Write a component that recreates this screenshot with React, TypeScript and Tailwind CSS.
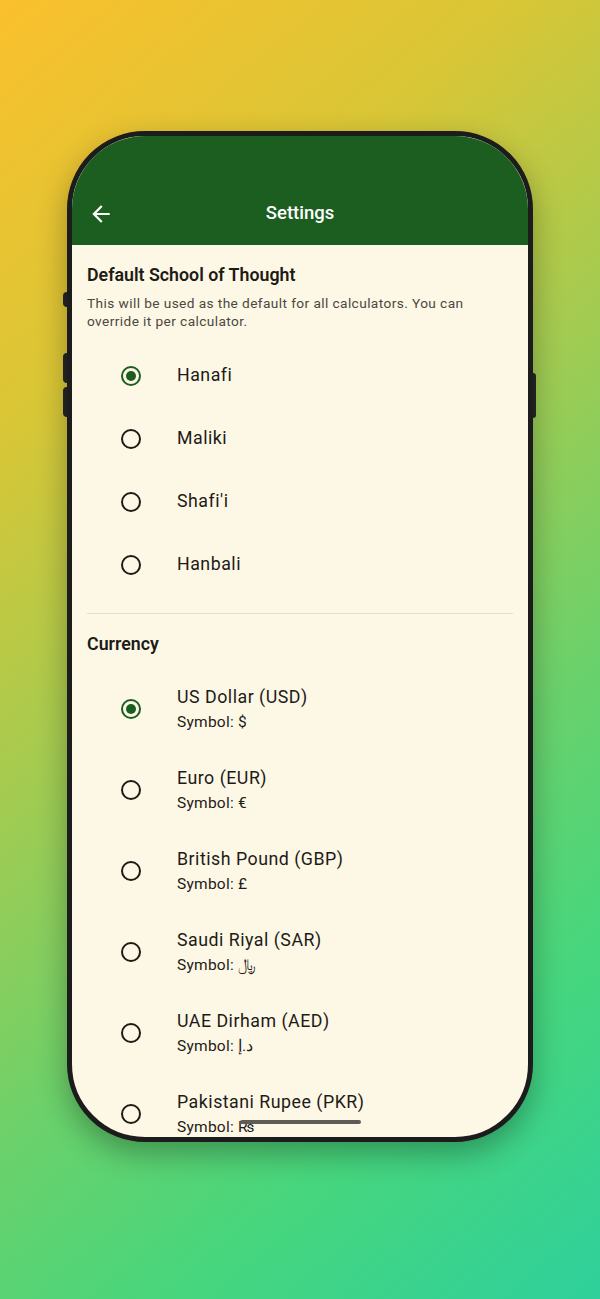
import { useState } from "react";

const schools = ["Hanafi", "Maliki", "Shafi'i", "Hanbali"];

const currencies = [
  { name: "US Dollar (USD)", symbol: "$" },
  { name: "Euro (EUR)", symbol: "€" },
  { name: "British Pound (GBP)", symbol: "£" },
  { name: "Saudi Riyal (SAR)", symbol: "﷼" },
  { name: "UAE Dirham (AED)", symbol: "د.إ" },
  { name: "Pakistani Rupee (PKR)", symbol: "₨" },
];

function Radio({ checked }: { checked: boolean }) {
  return (
    <div
      className={`w-[20px] h-[20px] shrink-0 rounded-full border-[2.2px] flex items-center justify-center ${
        checked ? "border-[#1b5e20]" : "border-[#1d1b16]"
      }`}
    >
      {checked && <div className="w-[10px] h-[10px] rounded-full bg-[#1b5e20]" />}
    </div>
  );
}

export default function App() {
  const [school, setSchool] = useState("Hanafi");
  const [currency, setCurrency] = useState("US Dollar (USD)");

  return (
    <div className="h-[1299px] w-full overflow-hidden flex justify-center pt-[131px] bg-[linear-gradient(140deg,#fbc02d_0%,#d9c636_24%,#a5cb50_44%,#6bd16b_64%,#47d67d_80%,#2fd09c_100%)] font-['Roboto',sans-serif]">
      <div className="relative w-[466px] h-[1011px]">
        {/* side buttons */}
        <div className="absolute left-[-4px] top-[161px] w-[4px] h-[15px] rounded-l bg-[#262626]" />
        <div className="absolute left-[-4px] top-[222px] w-[4px] h-[30px] rounded-l bg-[#262626]" />
        <div className="absolute left-[-4px] top-[256px] w-[4px] h-[30px] rounded-l bg-[#262626]" />
        <div className="absolute right-[-3px] top-[242px] w-[3px] h-[45px] rounded-r bg-[#262626]" />

        <div className="w-full h-full rounded-[78px] border-[5px] border-[#1c1c1c] overflow-hidden bg-[#fdf7e6] shadow-[0_12px_30px_rgba(0,0,0,0.3)] flex flex-col relative">
          <div className="h-[109px] shrink-0 bg-[#1b5e20] flex flex-col justify-end pb-[3px]">
            <div className="h-[56px] flex items-center relative">
              <button className="ml-[16px] w-[26px] h-[26px] text-white">
                <svg viewBox="0 0 24 24" width="26" height="26" fill="currentColor">
                  <path d="M20 11H7.83l5.59-5.59L12 4l-8 8 8 8 1.41-1.41L7.83 13H20v-2z" />
                </svg>
              </button>
              <div className="absolute inset-0 flex items-center justify-center pointer-events-none">
                <span className="text-white text-[18.5px] font-medium">Settings</span>
              </div>
            </div>
          </div>

          <div className="flex-1 overflow-hidden pt-[18px] text-[#1d1b16]">
            <div className="px-[15px]">
              <h2 className="text-[17.8px] leading-[24px] font-semibold">Default School of Thought</h2>
              <p className="mt-[7px] text-[13.7px] leading-[18px] tracking-[0.4px] text-[#4b4740]">
                This will be used as the default for all calculators. You can override it per calculator.
              </p>
            </div>

            <div className="mt-[14px]">
              {schools.map((s) => (
                <div
                  key={s}
                  onClick={() => setSchool(s)}
                  className="h-[63px] flex items-center pl-[49px] gap-[36px] cursor-pointer"
                >
                  <Radio checked={school === s} />
                  <span className="text-[17.8px] tracking-[0.5px]">{s}</span>
                </div>
              ))}
            </div>

            <div className="mx-[15px] mt-[17px] h-px bg-[#e2ddd0]" />

            <div className="px-[15px] mt-[18px]">
              <h2 className="text-[17.8px] leading-[24px] font-semibold">Currency</h2>
            </div>

            <div className="mt-[12px]">
              {currencies.map((c) => (
                <div
                  key={c.name}
                  onClick={() => setCurrency(c.name)}
                  className="h-[81px] flex items-center pl-[49px] gap-[36px] cursor-pointer"
                >
                  <Radio checked={currency === c.name} />
                  <div className="flex flex-col">
                    <span className="text-[17.8px] leading-[24px] tracking-[0.5px]">{c.name}</span>
                    <span className="mt-[3px] text-[15.5px] leading-[20px] tracking-[0.25px]">
                      Symbol: {c.symbol}
                    </span>
                  </div>
                </div>
              ))}
            </div>
          </div>

          <div className="absolute left-[168px] bottom-[13px] w-[121px] h-[4px] rounded-full bg-[#5f5c56]" />
        </div>
      </div>
    </div>
  );
}
